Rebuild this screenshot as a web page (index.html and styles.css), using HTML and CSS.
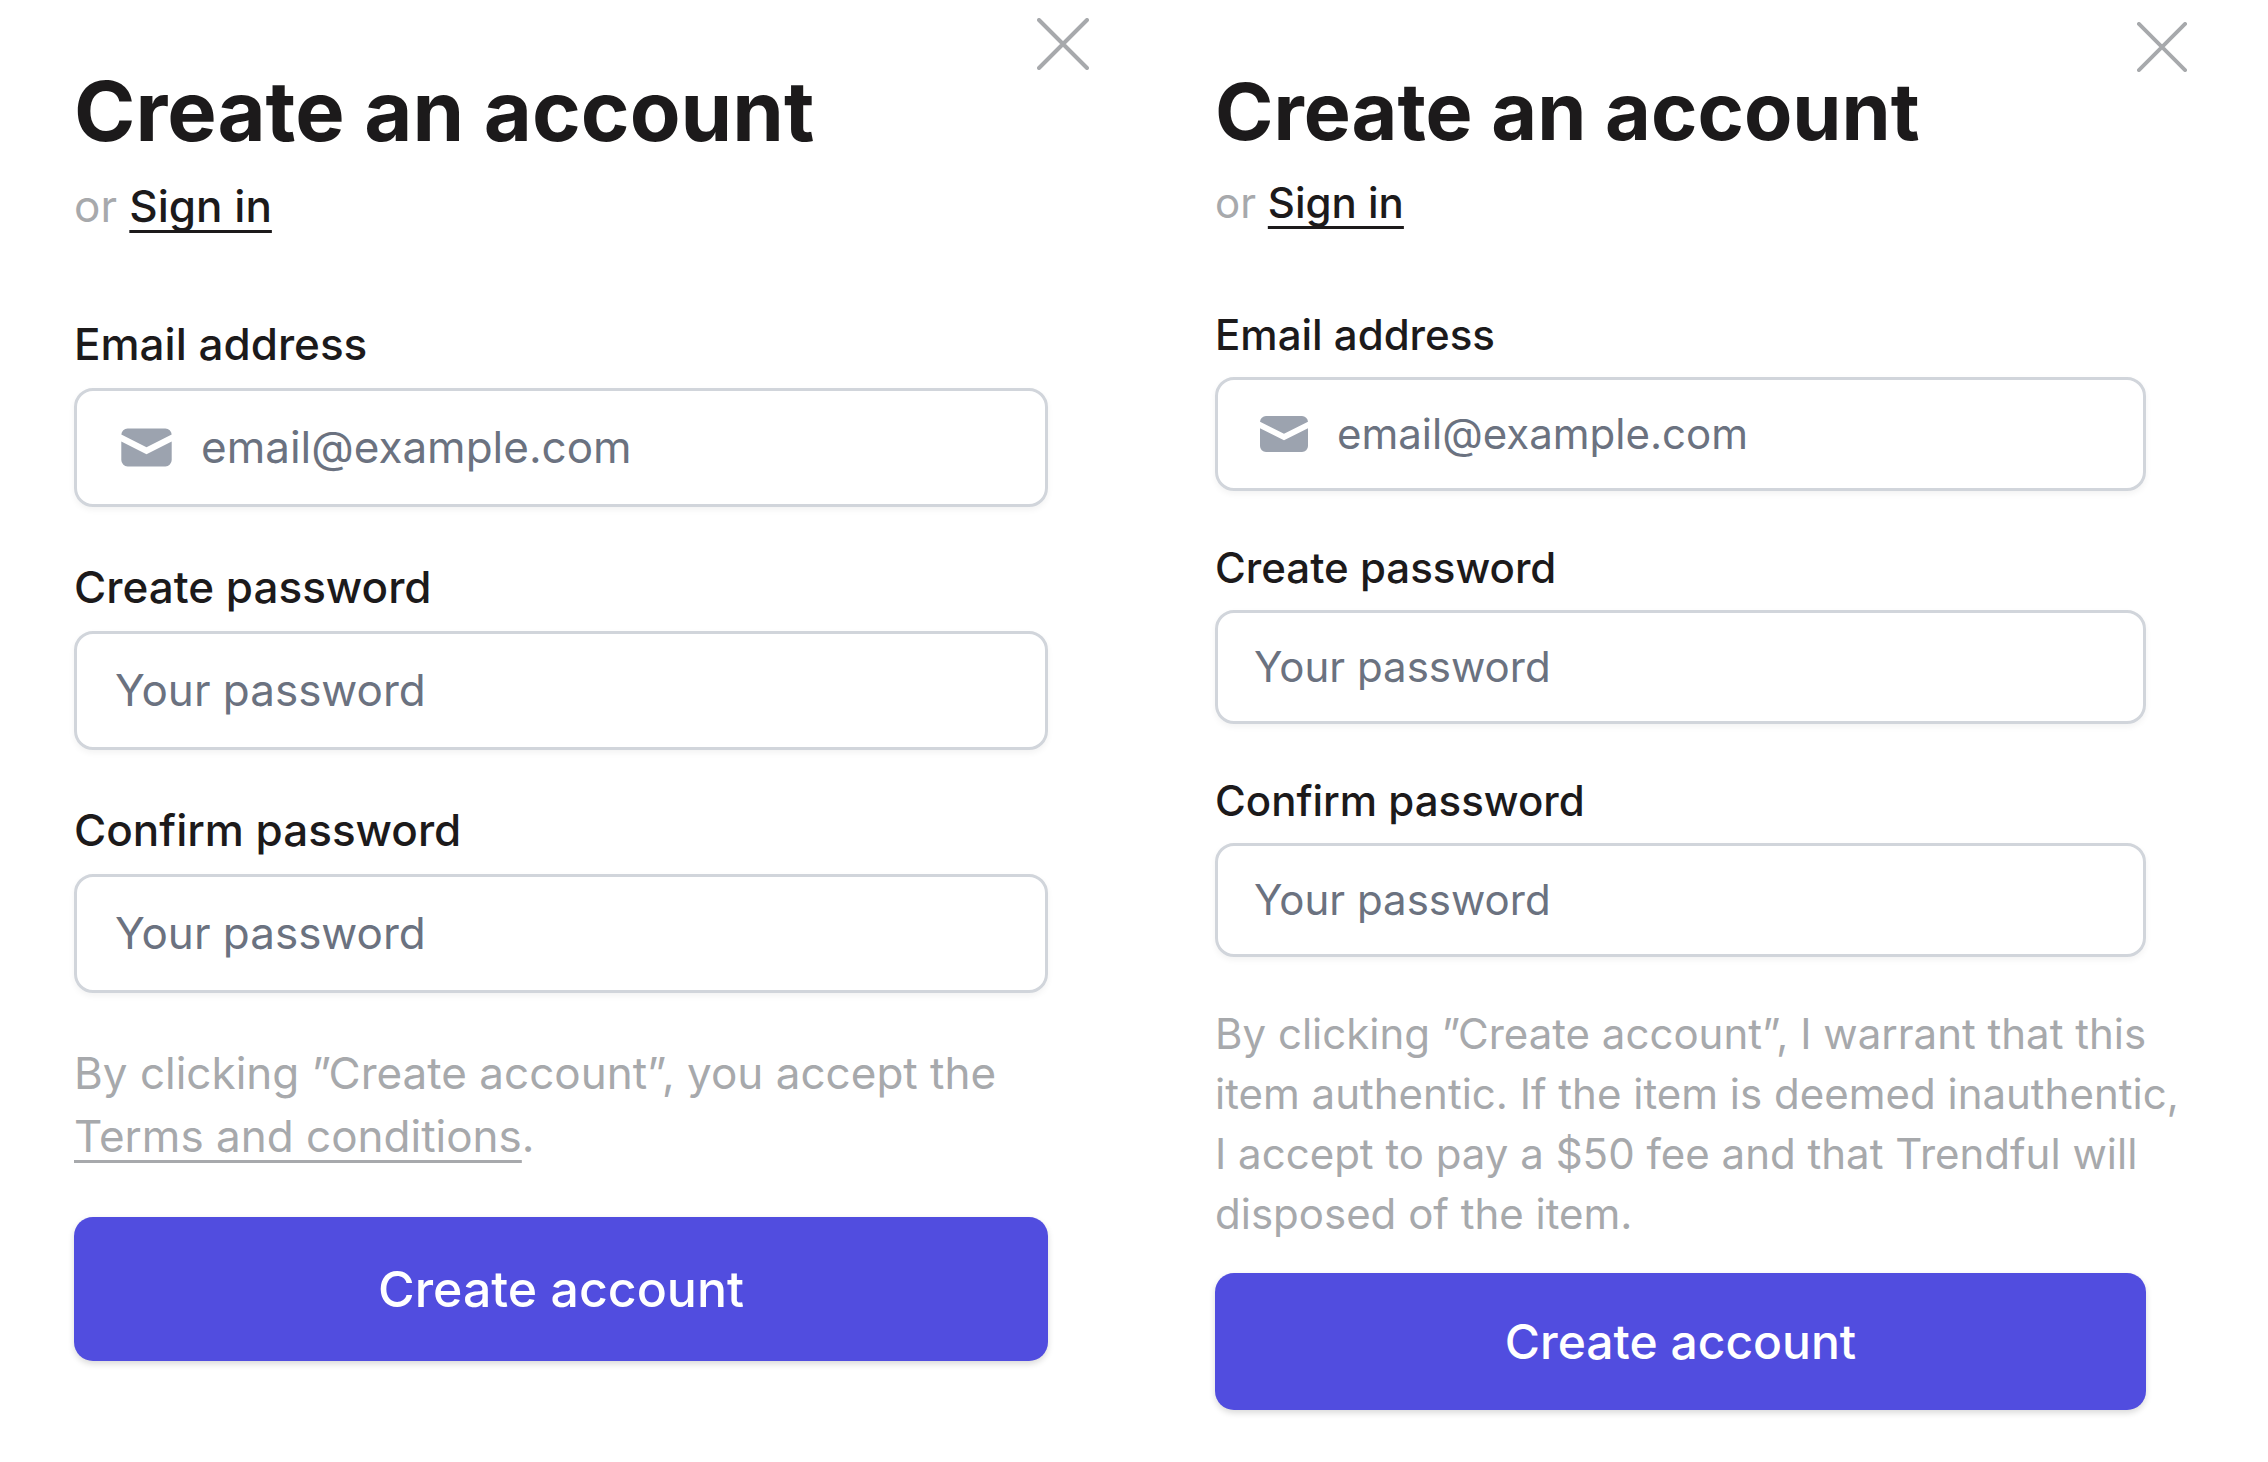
FILE: index.html
```
<!DOCTYPE html>
<html lang="en">
<head>
  <meta charset="UTF-8" />
  <meta name="viewport" content="width=device-width, initial-scale=1" />
  <title>Create an account</title>
  <link rel="stylesheet" href="styles.css">
</head>
<body>

  <main class="panels">
    <section class="panel panel-large">
      <header class="panel-header">
        <h1>Create an account</h1>
        <button type="button" class="btn-close" aria-label="Close">
          <svg viewBox="0 0 52 52" fill="none" stroke="currentColor" stroke-width="4" stroke-linecap="round">
            <path d="M2 2L50 50M50 2L2 50" />
          </svg>
        </button>
      </header>
      <p class="switch">or <a href="#">Sign in</a></p>

      <form>
        <div class="field">
          <label for="email-1">Email address</label>
          <div class="input-box">
            <svg class="mail-icon" viewBox="0 0 20 20" fill="currentColor">
              <path d="M2.003 5.884L10 9.882l7.997-3.998A2 2 0 0016 4H4a2 2 0 00-1.997 1.884z" />
              <path d="M18 8.118l-8 4-8-4V14a2 2 0 002 2h12a2 2 0 002-2V8.118z" />
            </svg>
            <input type="email" id="email-1" placeholder="email@example.com" />
          </div>
        </div>
        <div class="field">
          <label for="password-1">Create password</label>
          <div class="input-box">
            <input type="password" id="password-1" placeholder="Your password" />
          </div>
        </div>
        <div class="field">
          <label for="confirm-1">Confirm password</label>
          <div class="input-box">
            <input type="password" id="confirm-1" placeholder="Your password" />
          </div>
        </div>
        <p class="note">By clicking ”Create account”, you accept the <a href="#">Terms and conditions</a>.</p>
        <button type="submit" class="btn-submit">Create account</button>
      </form>
    </section>

    <section class="panel panel-small">
      <header class="panel-header">
        <h1>Create an account</h1>
        <button type="button" class="btn-close" aria-label="Close">
          <svg viewBox="0 0 52 52" fill="none" stroke="currentColor" stroke-width="4" stroke-linecap="round">
            <path d="M2 2L50 50M50 2L2 50" />
          </svg>
        </button>
      </header>
      <p class="switch">or <a href="#">Sign in</a></p>

      <form>
        <div class="field">
          <label for="email-2">Email address</label>
          <div class="input-box">
            <svg class="mail-icon" viewBox="0 0 20 20" fill="currentColor">
              <path d="M2.003 5.884L10 9.882l7.997-3.998A2 2 0 0016 4H4a2 2 0 00-1.997 1.884z" />
              <path d="M18 8.118l-8 4-8-4V14a2 2 0 002 2h12a2 2 0 002-2V8.118z" />
            </svg>
            <input type="email" id="email-2" placeholder="email@example.com" />
          </div>
        </div>
        <div class="field">
          <label for="password-2">Create password</label>
          <div class="input-box">
            <input type="password" id="password-2" placeholder="Your password" />
          </div>
        </div>
        <div class="field">
          <label for="confirm-2">Confirm password</label>
          <div class="input-box">
            <input type="password" id="confirm-2" placeholder="Your password" />
          </div>
        </div>
        <p class="note">By clicking ”Create account”, I warrant that this item authentic. If the item is deemed inauthentic, I accept to pay a $50 fee and that Trendful will disposed of the item.</p>
        <button type="submit" class="btn-submit">Create account</button>
      </form>
    </section>
  </main>

</body>
</html>
```
FILE: styles.css
```
* {
  box-sizing: border-box;
}
body {
  margin: 0;
  font-family: Inter, "Liberation Sans", sans-serif;
  background: #fff;
  color: #1c1a1b;
}
h1,
p {
  margin: 0;
}

.panels {
  display: grid;
  grid-template-columns: repeat(auto-fit, minmax(900px, 1fr));
}

/* the same form in two sizes */
.panel-large {
  --text: 44px;
  --line: 63px;
  --title: 83px;
  --title-line: 100px;
  --title-top: 43px;
  --title-gap: 14px;
  --button-text: 50px;
  --input-height: 119px;
  --button-height: 144px;
  --field-gap: 49px;
  --form-gap: 75px;
  --button-gap: 49px;
  --inset: 41px;
  --icon: 63px;
  --close: 52px;
  padding: 18px 45px 48px 74px;
}
.panel-small {
  --text: 42px;
  --line: 60px;
  --title: 79px;
  --title-line: 96px;
  --title-top: 41px;
  --title-gap: 14px;
  --button-text: 48px;
  --input-height: 114px;
  --button-height: 137px;
  --field-gap: 47px;
  --form-gap: 72px;
  --button-gap: 29px;
  --inset: 39px;
  --icon: 60px;
  --close: 50px;
  padding: 22px 81px 48px 81px;
}
.field,
.btn-submit {
  width: calc(100% - 41px);
}

.panel-header {
  display: flex;
  align-items: flex-start;
  justify-content: space-between;
}
h1 {
  margin-top: var(--title-top);
  font-size: var(--title);
  line-height: var(--title-line);
  font-weight: 700;
}
.btn-close {
  width: var(--close);
  height: var(--close);
  padding: 0;
  border: none;
  background: none;
  color: #a7a9ac;
  cursor: pointer;
}
.btn-close svg {
  display: block;
  width: 100%;
}

.switch,
.note,
label {
  font-size: var(--text);
  line-height: var(--line);
}
.switch {
  margin-top: var(--title-gap);
  margin-bottom: var(--form-gap);
  color: #a7a9ac;
}
a {
  color: inherit;
  text-decoration: underline;
  text-decoration-thickness: 3px;
  text-underline-offset: 8px;
  text-decoration-skip-ink: none;
}
.switch a {
  color: #1c1a1b;
  font-weight: 500;
}

.field {
  margin-bottom: var(--field-gap);
}
label {
  display: block;
  margin-bottom: 12px;
  font-weight: 500;
}
.input-box {
  display: flex;
  align-items: center;
  gap: 23px;
  height: var(--input-height);
  padding: 0 calc(var(--inset) - 3px);
  border: 3px solid #d1d5db;
  border-radius: 19px;
  box-shadow: 0 3px 6px rgb(0 0 0 / 0.05);
}
.mail-icon {
  flex: none;
  width: var(--icon);
  height: var(--icon);
  color: #9ca3af;
}
input {
  flex: 1;
  min-width: 0;
  padding: 0;
  border: none;
  outline: none;
  background: none;
  font-family: inherit;
  font-size: var(--text);
  line-height: var(--line);
  color: #1c1a1b;
}
input::placeholder {
  color: #6b7280;
  opacity: 1;
}

.note {
  margin-bottom: var(--button-gap);
  color: #a7a9ac;
}
.btn-submit {
  display: block;
  height: var(--button-height);
  padding: 0;
  border: none;
  border-radius: 19px;
  background: #514ddf;
  box-shadow: 0 3px 6px rgb(0 0 0 / 0.15);
  color: white;
  font-family: inherit;
  font-size: var(--button-text);
  font-weight: 500;
  cursor: pointer;
}
```
